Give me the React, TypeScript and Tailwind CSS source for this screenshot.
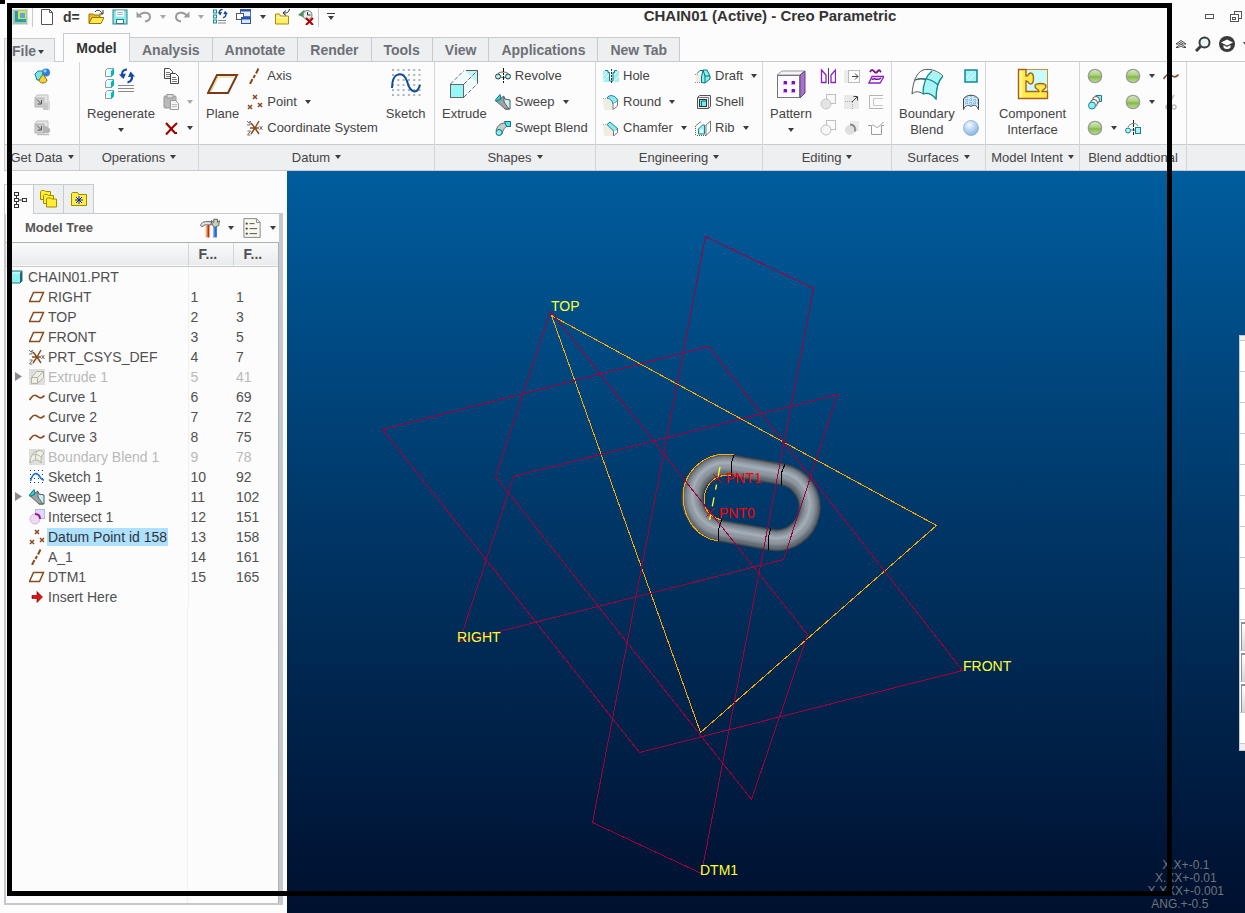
import type { ReactNode } from "react";

const BROWN = "#8b4a1c";

/* ---------- icon drawings, keyed by name ---------- */

const brownX = (x: number, y: number, s = 2) => (
  <path d={`M${x - s} ${y - s}L${x + s} ${y + s}M${x + s} ${y - s}L${x - s} ${y + s}`} stroke={BROWN} strokeWidth="1.5" />
);

const box = (x: number, y: number) => (
  <g key={`${x}-${y}`}>
    <path d={`M${x} ${y + 2}l2 -2h6v6l-2 2h-6z`} fill="#e9ffff" stroke="#8a9aa0" />
    <path d={`M${x + 5.5} ${y + 2.5}l3 -3v6l-3 3z`} fill="#00b8c4" />
  </g>
);

const greyCube = (
  <>
    <path d="M1 4L3 1h11v9l-2 3" fill="#e6e6e6" stroke="#c0c0c0" />
    <rect x="1" y="4" width="9" height="9" fill="#cdcdcd" stroke="#b4b4b4" />
    <path d="M3 5.500l4 4M7.500 6v4H3.500" stroke="#555" fill="none" />
  </>
);

const folder = (x: number, y: number) => (
  <path d={`M${x} ${y + 9}v-8l1 -1h3l1 1h5v8z`} fill="#ffee33" stroke="#a08a00" />
);

/* two arrows chasing each other, 16 x 14 */
const cycle = (
  <>
    <path d="M8 0.500C3 1 2.500 4 3.500 7.500" stroke="#1748a8" strokeWidth="2.200" fill="none" />
    <path d="M0 5.500L7 4.500L4.500 10z" fill="#1748a8" />
    <path d="M8.500 13.500C13 12.500 13.500 9 12.500 6" stroke="#1748a8" strokeWidth="2.200" fill="none" />
    <path d="M9 8L16 7.500L11.500 2.500z" fill="#1748a8" />
  </>
);

const icons: Record<string, ReactNode> = {
  app: (
    <>
      <rect x="0.5" y="0.5" width="15" height="15" fill="#9dc8b0" stroke="#d6dfda" />
      <rect x="3" y="2" width="11" height="11" fill="#2d9aa8" />
      <rect x="6" y="2" width="8" height="8" fill="#d5e24a" />
      <rect x="8" y="4" width="5" height="5" fill="#58a8e8" />
    </>
  ),
  newFile: <path d="M2.5 0.5h8l3 3v12h-11zM10.5 0.5v3h3" fill="#fff" stroke="#555" />,
  open: (
    <>
      <path d="M1 14V5h4l1 1h6v3" fill="#e8b820" stroke="#9a7400" />
      <path d="M1 14.500l3 -6h12l-3 6z" fill="#ffe94a" stroke="#9a7400" />
      <path d="M7 3c2 -3 6 -2 7 2M11.500 5h3.500v-4" fill="none" stroke="#333" />
    </>
  ),
  save: (
    <>
      <rect x="1" y="1" width="14" height="14" fill="#8aeaf0" stroke="#348088" />
      <rect x="4" y="1.500" width="8" height="6" fill="#fff" />
      <path d="M5 3.500h6M5 5.500h6" stroke="#9bc" />
      <rect x="4.500" y="10.500" width="7" height="4" fill="#fff" stroke="#348088" />
    </>
  ),
  undo: (
    <>
      <path d="M3 7C6 2 14 3 14 8C14 11 12 12 9 12.500" fill="none" stroke="#9b9b9b" strokeWidth="2" />
      <path d="M0.500 2.500v6h6z" fill="#9b9b9b" />
    </>
  ),
  redo: (
    <>
      <path d="M13 7C10 2 2 3 2 8C2 11 4 12 7 12.500" fill="none" stroke="#9b9b9b" strokeWidth="2" />
      <path d="M15.500 2.500v6h-6z" fill="#9b9b9b" />
    </>
  ),
  regenSmall: (
    <>
      {[1, 6, 11].map((y) => (
        <rect key={y} x="1.500" y={y} width="3" height="3" fill="#d7ffff" stroke="#178a94" />
      ))}
      <path d="M6 11.500h8M6 14h8" stroke="#888" />
      <g transform="translate(5.500 0) scale(0.650)">{cycle}</g>
    </>
  ),
  windows: (
    <>
      <rect x="4.500" y="0.500" width="10" height="7" fill="#e5edfa" stroke="#5871a0" />
      <path d="M4 1.500h11" stroke="#2855b0" strokeWidth="2" />
      <rect x="0.500" y="4.500" width="7" height="6" fill="#fff" stroke="#555" />
      <rect x="5.500" y="8.500" width="9" height="6" fill="#dce8fb" stroke="#2855b0" />
      <path d="M5 9.500h10" stroke="#2855b0" strokeWidth="2" />
    </>
  ),
  folderUp: (
    <>
      <path d="M1.500 15v-10h4l1 2h8v8z" fill="#ffee66" stroke="#a88b10" />
      <path d="M2 8.500h12" stroke="#fffcd0" />
      <path d="M15.500 0c-1 4 -3 4 -6 4M12 1.500l-3 2.500l3 2.500" stroke="#222" fill="none" />
    </>
  ),
  eraseView: (
    <>
      <path d="M0 6l6 -5l3 3l-2 5z" fill="#3f9a5e" />
      <circle cx="9.500" cy="6" r="4.500" fill="#e6f0ea" stroke="#777" />
      <path d="M9.500 3v3h3" stroke="#333" fill="none" />
      <path d="M8 9l7 7M15 9l-7 7" stroke="#b00000" strokeWidth="2" />
    </>
  ),
  primitives: (
    <>
      <path d="M1 6l3 -3h5l1 5l-3 4h-4z" fill="#73e8f0" stroke="#168090" />
      <circle cx="12" cy="4.500" r="4" fill="#2f7fe0" />
      <circle cx="11" cy="3" r="1.500" fill="#a8d0ff" />
      <path d="M9 6l4 6c0 4 -8 4 -8 0z" fill="#f3d33a" stroke="#8c6c10" />
    </>
  ),
  importGrey: (
    <>
      {greyCube}
      <path d="M9 9l1.500 -2H16v9H9z" fill="#dadada" />
      <path d="M9 9h5v7H9z" fill="#c8c8c8" />
    </>
  ),
  importFill: (
    <>
      {greyCube}
      <path d="M9 6h3l4 3v3l-2 1H9z" fill="#b4b4b4" />
      <path d="M3 14.500h12" stroke="#bbb" strokeWidth="1.500" />
    </>
  ),
  copy: (
    <>
      <path d="M1.500 0.500h5l3 3v7h-8z" fill="#fff" stroke="#444" />
      <path d="M3 4.500h4M3 6.500h4M3 8.500h4" stroke="#777" />
      <path d="M7.500 5.500h5l3 3v7h-8z" fill="#fff" stroke="#444" />
      <path d="M9 9.500h4M9 11.500h5M9 13.500h5" stroke="#777" />
    </>
  ),
  paste: (
    <>
      <rect x="1" y="2" width="12" height="12" rx="1" fill="#b9b9b9" stroke="#999" />
      <rect x="4" y="0.500" width="6" height="3.500" fill="#ddd" stroke="#999" />
      <path d="M7.500 6.500h5l3 3v6h-8z" fill="#f5f5f5" stroke="#999" />
      <path d="M9 10.500h5M9 12.500h5" stroke="#bbb" />
    </>
  ),
  del: (
    <>
      <path d="M3 3l9 10h2" stroke="#a00000" strokeWidth="2.200" />
      <path d="M14 3L9 8L3 14.500" stroke="#a00000" strokeWidth="2" />
    </>
  ),
  axis: <path d="M11.500 0.500l-2.500 5M8 7l-1.500 3M5.500 11l-2.500 5" stroke={BROWN} strokeWidth="2" fill="none" />,
  points: (
    <>
      {brownX(8, 3)}
      {brownX(3, 13)}
      {brownX(13, 11)}
    </>
  ),
  csys: (
    <>
      <path d="M3 8h9M8 8L12 1M8 8l4 6M8 8L4 14M8 8L4 3" stroke={BROWN} strokeWidth="1.500" />
      <path d="M0 1l2 2l2 -2M3 1v4H0M0.500 11h3l-3 4h3M12.500 6l3 4M15.500 6l-3 4" stroke="#707070" fill="none" />
    </>
  ),
  revolve: (
    <>
      <circle cx="3" cy="8.500" r="2.500" fill="#a9f4f6" stroke="#333" />
      <circle cx="13" cy="8.500" r="2.500" fill="#a9f4f6" stroke="#333" />
      <path d="M3 5.500c3 -2 7 -2 10 0M6 9c1 1 4 1 5 0" fill="none" stroke="#555" />
      <path d="M8.500 0v16" stroke="#111" strokeDasharray="4 1 2 1" />
    </>
  ),
  sweep: (
    <>
      <path d="M8 3h1l1 2l5 1v9h-5z" fill="#c6f3f6" stroke="#555" />
      <path d="M1 7l8 -5v6l5 7h-4z" fill="#9aa3a6" stroke="#444" strokeWidth="0.700" />
      <path d="M0.500 6L5 0.500L6 5L1 7.500z" fill="#39d4dc" stroke="#08737c" />
    </>
  ),
  sweptBlend: (
    <>
      <path d="M1 11c1 -4 3 -8 9 -8l4 3c-4 0 -6 4 -7 8z" fill="#c3cdd0" stroke="#666" />
      <path d="M9.500 1.500h6v5h-4z" fill="#5de0e6" stroke="#08737c" />
      <circle cx="4" cy="12.500" r="3" fill="#8ceef2" stroke="#08737c" />
    </>
  ),
  hole: (
    <>
      <path d="M0 3h5l1.500 2v9H0zM16 3h-5l-1.500 2v9H16z" fill="#a0f0f4" />
      <path d="M0 8l4 -4M0 13l6 -6M10 8l4 -4M10 14l6 -6" stroke="#fff" />
      <path d="M2 2.500h3v2h1.500v8.500h3.500V4.500h1.500v-2H14" fill="none" stroke="#147e88" />
      <path d="M8.500 1v15" stroke="#333" strokeDasharray="2 1" />
    </>
  ),
  round: (
    <>
      <path d="M0 5h5l5 5v6H1z" fill="#efede2" />
      <path d="M0 4.500h5" stroke="#aaa" strokeDasharray="1 1" />
      <path d="M4 4C6 0 13 1 15 7l-5 3C9 7 8 5 4 4z" fill="#8eeaf0" stroke="#168090" />
      <path d="M10 10v5.500l4.500 -3.500V7.500" fill="#fff" stroke="#777" />
    </>
  ),
  chamfer: (
    <>
      <path d="M0 5h5l5 5v6H1z" fill="#efede2" />
      <path d="M0 4.500h5" stroke="#aaa" strokeDasharray="1 1" />
      <path d="M4 4.500l3 -2.500l8 7l-4 2.500z" fill="#8eeaf0" stroke="#168090" />
      <path d="M10.500 11v5l4 -3.500V9.500" fill="#fff" stroke="#777" />
    </>
  ),
  draft: (
    <>
      <path d="M1 7h6v7H1z" fill="#efede2" />
      <path d="M0 6.500h4M0 14.500h7" stroke="#888" strokeDasharray="1 1" />
      <path d="M6.500 14.500V9L8 2h4l3 6v3l-5 4z" fill="#8aeef2" stroke="#08737c" />
      <path d="M10 15V8L8 2M10 8h5" stroke="#08737c" />
      <path d="M2 5.500l3 -3h4" fill="none" stroke="#08737c" />
    </>
  ),
  shell: (
    <>
      <path d="M2.500 3.500l2 -2h11v11l-2 2h-11z" fill="#eee" stroke="#555" />
      <path d="M2.500 3.500h11v11" fill="none" stroke="#777" />
      <rect x="4.500" y="5.500" width="7" height="7" fill="#7ae8ec" stroke="#333" />
      <path d="M6.500 12v-5h5" stroke="#08737c" fill="none" />
    </>
  ),
  rib: (
    <>
      <path d="M0.500 6v10M2 15.500h9" stroke="#555" strokeDasharray="1 1" />
      <path d="M1 5.500l5 -4M11 15.500V5l4.500 -4v10z" fill="none" stroke="#555" strokeWidth="0.800" />
      <path d="M3.500 14V9l4 -4h2v9z" fill="#a2f2f4" stroke="#168090" />
      <path d="M5 13V9.500h3V13z" fill="#e2ffff" />
    </>
  ),
  mirror: (
    <>
      <path d="M1.500 14.500V2L6 7v7.500zM15.500 14.500V2L11 7v7.500z" fill="#fff" stroke="#8a1fd0" strokeWidth="1.300" />
      <path d="M8.500 0v16" stroke="#444" />
    </>
  ),
  extend: (
    <>
      <path d="M0 2h5v13H0" fill="#ececec" />
      <rect x="4.500" y="2.500" width="11" height="12" fill="none" stroke="#bbb" />
      <path d="M8 8.500h6M11 5.500l3 3l-3 3" stroke="#444" fill="none" />
    </>
  ),
  project: (
    <>
      <path d="M2 4c3 -6 4 3 7 0s2 -2 4 0" fill="none" stroke="#7a1090" strokeWidth="1.800" />
      <path d="M4 8.500h12l-4 6.500H1z" fill="#fff" stroke="#8a1fd0" strokeWidth="1.300" />
      <path d="M4 12c2 -4 4 2 9 -2" stroke="#7a1090" fill="none" strokeWidth="1.500" />
    </>
  ),
  merge: (
    <>
      <rect x="6.500" y="0.500" width="9" height="9" fill="#f8f8f8" stroke="#c0c0c0" />
      <circle cx="6" cy="10" r="5" fill="#e4e4e4" stroke="#c8c8c8" />
    </>
  ),
  trim: (
    <>
      <path d="M0 1h12l3 3v11H0z" fill="#e9e9e9" />
      <path d="M1 7.500h7.500V15" stroke="#aaa" strokeDasharray="1 1" />
      <path d="M8 8l5 -5M9.500 2.500h4v4" stroke="#444" fill="none" />
    </>
  ),
  offset: (
    <>
      <path d="M15 1.500H1.500v13H15" fill="none" stroke="#b4b4b4" />
      <path d="M15 4.500H5.500v7H15" fill="none" stroke="#c8c8c8" />
    </>
  ),
  merge2: (
    <>
      <rect x="6.500" y="0.500" width="9" height="9" fill="none" stroke="#c0c0c0" />
      <circle cx="6" cy="10" r="5" fill="#f6f6f6" stroke="#c0c0c0" />
    </>
  ),
  intersectGrey: (
    <>
      <rect x="6" y="1" width="9" height="10" fill="#ececec" />
      <circle cx="6" cy="10" r="5" fill="#dedede" />
      <path d="M6 4.500c4 0 6 3 5 7" fill="none" stroke="#8a8a8a" strokeWidth="2" />
    </>
  ),
  solidify: <path d="M0 5.500h3.500v9h10v-9H16M3.500 6c3 -3 4 3 7 1l5 -5" fill="none" stroke="#9c9c9c" />,
  fill: (
    <>
      <rect x="2" y="2" width="12" height="12" fill="#a5f1f5" stroke="#108890" strokeWidth="1.500" />
      <path d="M3 10l7 -7M5 13l8 -8" stroke="#dff" />
    </>
  ),
  style: (
    <>
      <path d="M0.500 5c3 -5 12 -5 15 0v10.500c-2 -5 -5 -5 -7.500 -3c-3 -2 -6 -1 -7.500 3z" fill="#cfe8fa" stroke="#444" />
      <path d="M4 3v9M8 2v10M12 3v9M2 6h13M2 9h13" stroke="#6ba2d8" strokeDasharray="1 1" />
    </>
  ),
  sphere: <circle cx="8" cy="8" r="7.500" fill="url(#sphereBlue)" stroke="#7ea6cf" strokeWidth="0.700" />,
  green: <circle cx="8" cy="8" r="6.700" fill="url(#ballGreen)" stroke="#9c9c9c" strokeWidth="1.300" />,
  blendChain: (
    <>
      <path d="M8.500 1.500h6v6h-3" fill="#8ceef2" stroke="#168090" />
      <circle cx="9" cy="6" r="3.500" fill="#fff" stroke="#555" />
      <circle cx="7" cy="9" r="3.500" fill="#fff" stroke="#555" />
      <circle cx="5" cy="11.500" r="3.500" fill="#8ceef2" stroke="#168090" />
    </>
  ),
  blendMirror: (
    <>
      <circle cx="3" cy="10.500" r="2.500" fill="#a9f4f6" stroke="#168090" />
      <rect x="10.500" y="7.500" width="5" height="6" fill="#a9f4f6" stroke="#168090" />
      <path d="M3 7c2 -4 8 -5 10 -1M6 10h4" fill="none" stroke="#777" />
      <path d="M8.500 0v16" stroke="#222" strokeDasharray="3 1" />
    </>
  ),
  curve: <path d="M0.500 11C3 8 4 5 7 6.500S11 11 15.500 6.500" stroke={BROWN} strokeWidth="1.600" fill="none" />,
  percent: <path d="M5 5l3 5M11 1l-5 9M3 13a2 2 0 1 0 4 0a2 2 0 1 0 -4 0M9 13a2 2 0 1 0 4 0a2 2 0 1 0 -4 0" stroke="#bbb" fill="none" strokeWidth="1.500" />,
  planeSmall: <path d="M4.500 3.500h10l-4 9h-10z" fill="#fff" stroke={BROWN} strokeWidth="1.500" />,
  extrudeGrey: (
    <>
      <rect width="16" height="16" fill="#dedede" />
      <path d="M2.500 8.500h6v6h-6zM2.500 8.500l5 -6h7v6l-6 6M8.500 8.500l6 -6" fill="#eeeee6" stroke="#b4b4a0" />
    </>
  ),
  boundaryGrey: (
    <>
      <rect width="16" height="16" fill="#dedede" />
      <path d="M1 14C1 8 4 3 8 2c3 -1 5 0 7 2c-3 3 -3 5 -3 10c-2 -4 -7 -4 -11 0zM8 2c-2 4 -2 5 -1 9M4 6c4 -1 6 0 9 3" fill="#efefe8" stroke="#b4b4a0" />
    </>
  ),
  sketchSmall: (
    <>
      {[1, 5, 9, 13].map((y) => (
        <path key={y} d={`M1 ${y + 0.5}h15`} stroke="#303080" strokeDasharray="1 3" />
      ))}
      <path d="M1.500 12C4 3 8 3 11 8c1 2 3 3 4 3" stroke="#1478e0" strokeWidth="1.600" fill="none" />
    </>
  ),
  intersect: (
    <>
      <rect x="6.500" y="0.500" width="9" height="9" fill="#dcdcfa" stroke="#b5b5ee" />
      <circle cx="6" cy="10" r="5" fill="#ecdcf2" stroke="#d8b4e8" />
      <path d="M6 5c3 0 5 2 5 5" fill="none" stroke="#a010a0" strokeWidth="2" />
    </>
  ),
  insert: (
    <path d="M3 6.500h5v-4l5.500 5.500l-5.500 5.500v-4h-5z" fill="#e81010" stroke="#500" strokeWidth="0.600" />
  ),
  part: (
    <>
      <path d="M2 4l2 -2h11v10l-2 2H2z" fill="#8cf2f2" stroke="#287880" />
      <path d="M13 4l2 -2v10l-2 2z" fill="#236870" />
      <path d="M2 4h11" stroke="#e8ffff" />
    </>
  ),
  treeTab: (
    <>
      <path d="M3.500 3v11M3.500 8h8" stroke="#333" />
      <rect x="1.500" y="0.500" width="4" height="3" fill="#fff" stroke="#333" />
      <rect x="1.500" y="6.500" width="4" height="3" fill="#fff" stroke="#333" />
      <rect x="1.500" y="12.500" width="4" height="3" fill="#fff" stroke="#333" />
      <rect x="9.500" y="6.500" width="4" height="3" fill="#fff" stroke="#333" />
    </>
  ),
  tools: (
    <>
      <path d="M0.500 6C1 3 4 2.500 9 3v2.500H4L1.500 7z" fill="#dfe3e5" stroke="#666" strokeWidth="0.800" />
      <path d="M4.500 5.500h3v10h-3z" fill="#e8b080" />
      <path d="M6 5.500h1.500v10H6z" fill="#c03010" />
      <path d="M10.500 6h3v9.500h-3z" fill="#2468e0" />
      <path d="M10.500 6h1v9.500h-1z" fill="#90b8f8" />
      <path d="M9 2l2 1.500V1l3 0l0 2.500l1.500 -1.500l-0.500 4l-3 1.500l-2 -1.500z" fill="#c9cfc0" stroke="#555" strokeWidth="0.700" />
    </>
  ),
  list: (
    <>
      <path d="M1.500 0.500h10l3 3v12h-13zM11.500 0.500v3h3" fill="#f9f8ee" stroke="#888" strokeWidth="0.800" />
      <path d="M6 4.500h4M6 8.500h6M6 12.500h6" stroke="#555" strokeWidth="0.800" />
      <path d="M3 4.500h1.500M3 8.500h1.500M3 12.500h1.500" stroke="#333" strokeWidth="1.500" />
    </>
  ),
};

const bigIcons: Record<string, ReactNode> = {
  regenerate: (
    <>
      {box(0.5, 0.5)}
      {box(0.5, 11.5)}
      {box(0.5, 22.5)}
      <path d="M13 17.500h16M13 20.500h16M13 23.500h16" stroke="#8a8a8a" />
      <g transform="translate(14 1)">{cycle}</g>
    </>
  ),
  plane: (
    <>
      <path d="M10 7h20l-9 18H1z" fill="#fff" stroke="#7a3c18" strokeWidth="2" />
      <path d="M11.500 9h15.500" stroke="#e0c880" />
      <path d="M11 9L4 23.500" stroke="#e8c860" />
    </>
  ),
  sketch: (
    <>
      {[2, 7, 12, 17, 22, 27].map((y) => (
        <path key={y} d={`M2 ${y}h29`} stroke="#a8b4c4" strokeWidth="2" strokeDasharray="2 3.300" />
      ))}
      <path d="M2 20C2 3 14 3 17 13C20 25 27 27 30 17" stroke="#104a98" strokeWidth="2" fill="none" />
    </>
  ),
  extrude: (
    <>
      <path d="M17 2.500h12.500v13L16 29V16H3z" fill="#f1fdfd" />
      <path d="M18 2.500h11.500v12L19 5z" fill="#bff4f6" />
      <path d="M18 2.500h11.500v13" fill="none" stroke="#555" />
      <path d="M2.500 16L16 2.500M16 16L29.500 2.500M16 29L29.500 15.500" stroke="#666" strokeDasharray="4 2" fill="none" />
      <rect x="2.500" y="16.500" width="13" height="13" fill="#96f8f8" stroke="#666" />
    </>
  ),
  pattern: (
    <>
      <path d="M2 7l5 -4h23l-5 4z" fill="#f8f2fc" stroke="#999" />
      <path d="M25 7l5 -4v22l-5 5z" fill="#a872cc" stroke="#684080" />
      <rect x="2.500" y="7.500" width="22" height="22" fill="#fcfaff" stroke="#777" />
      {[[9, 13], [17, 13], [9, 21], [17, 21]].map(([x, y]) => (
        <g key={`${x}-${y}`}>
          <rect x={x - 1} y={y} width="4" height="4" fill="#d0a0ec" />
          <rect x={x} y={y} width="3" height="3" fill="#7a10c0" />
        </g>
      ))}
    </>
  ),
  boundary: (
    <>
      <path d="M1 26C2 14 5 5 12 2C19 0 27 3 32 8C26 14 25 22 25 31C20 25 15 24 12 26C8 23 4 23 1 26Z" fill="#fafdfd" stroke="#555" />
      <path d="M21 3C26 4 29 6 32 8C26 14 25 22 25 31C21 26 17 24 12 26C12 20 12 17 15 12C17 8 19 5 21 3Z" fill="#a6f4f4" />
      <path d="M4 12C12 9 21 11 27 17M21 3C15 8 12 16 12 26M32 8C26 14 25 22 25 31C21 26 17 24 12 26" fill="none" stroke="#108890" strokeWidth="1.300" />
      <path d="M4 12c4 -1.500 7 -1.500 11 0" stroke="#555" />
    </>
  ),
  component: (
    <>
      <rect x="1.500" y="1.500" width="29" height="29" fill="#c8fcfd" stroke="#d09030" />
      <path d="M1.500 1.500H9V8C11 9 11 5 13.500 5C17.500 5 17.500 16 13.500 16C11 16 11 12 9 13V23.500H22C22 21 18 21.500 18 18.500C18 14.500 29 14.500 29 18.500C29 21.500 25 21 25 23.500H30.500V30.500H1.500Z" fill="#ffe94c" stroke="#a86018" strokeWidth="1.400" />
      <path d="M2.500 2.500h3v27h-3z" fill="#fff6a8" opacity="0.700" />
    </>
  ),
};

function Icon({ n }: { n: string }) {
  return (
    <svg className="block size-4 shrink-0" viewBox="0 0 16 16" fill="none" aria-hidden="true">
      {icons[n]}
    </svg>
  );
}

function Arrow({ dim = false }: { dim?: boolean }) {
  return (
    <svg className={`block h-1 w-1.5 shrink-0 ${dim ? "text-[#a8a8a8]" : "text-[#3c3c3c]"}`} viewBox="0 0 6 4" aria-hidden="true">
      <path d="M0 0h6L3 4z" fill="currentColor" />
    </svg>
  );
}

function IconButton({ n, label }: { n: string; label: string }) {
  return (
    <button type="button" aria-label={label} className="flex h-[26px] w-4 items-center">
      <Icon n={n} />
    </button>
  );
}

function DropButton({ label, dim }: { label: string; dim?: boolean }) {
  return (
    <button type="button" aria-label={label} className="flex h-[26px] w-1.5 items-center">
      <Arrow dim={dim} />
    </button>
  );
}

function RowButton({ n, text, drop }: { n: string; text: string; drop?: boolean }) {
  return (
    <button type="button" className="flex h-[26px] items-center gap-1 whitespace-nowrap">
      <Icon n={n} />
      <span>{text}</span>
      {drop && (
        <span className="ml-1">
          <Arrow />
        </span>
      )}
    </button>
  );
}

function BigButton({ n, text, drop }: { n: string; text: string; drop?: boolean }) {
  return (
    <button type="button" className="flex shrink-0 flex-col items-center gap-1.5 self-start pt-[5px] leading-4">
      <svg className="block size-8" viewBox="0 0 32 32" fill="none" aria-hidden="true">
        {bigIcons[n]}
      </svg>
      <span className="whitespace-pre-line text-center">{text}</span>
      {drop && <Arrow />}
    </button>
  );
}

function Group({ title, drop = true, className, children }: { title: string; drop?: boolean; className: string; children: ReactNode }) {
  return (
    <section className={`flex shrink-0 flex-col border-r border-[#d3d6d9] ${className}`}>
      <div className="flex flex-1 gap-2 px-[7px] pt-px pb-[3px]">{children}</div>
      <button type="button" className="flex h-[26px] items-center justify-center gap-[5px] whitespace-nowrap border-t border-[#c8cbce] bg-[#eeeff1]">
        {title}
        {drop && (
          <span className="pb-0.5">
            <Arrow />
          </span>
        )}
      </button>
    </section>
  );
}

function TitleBar() {
  return (
    <header className="flex h-[33px] items-center">
      <div className="flex h-full w-[340px] shrink-0 items-center pl-3">
        <Icon n="app" />
        <span className="mx-1 h-5 w-px bg-[#c8cbce]" />
        <span className="ml-0.5"><IconButton n="newFile" label="New" /></span>
        <button type="button" aria-label="Dimension display" className="ml-2 text-sm font-bold leading-4 text-[#3a3a3a]">d=</button>
        <span className="ml-2"><IconButton n="open" label="Open" /></span>
        <span className="ml-2"><IconButton n="save" label="Save" /></span>
        <span className="ml-2"><IconButton n="undo" label="Undo" /></span>
        <span className="ml-2"><DropButton label="Undo list" dim /></span>
        <span className="ml-2"><IconButton n="redo" label="Redo" /></span>
        <span className="ml-2"><DropButton label="Redo list" dim /></span>
        <span className="ml-2"><IconButton n="regenSmall" label="Regenerate" /></span>
        <span className="ml-2"><IconButton n="windows" label="Windows" /></span>
        <span className="ml-2"><DropButton label="Window list" /></span>
        <span className="ml-2"><IconButton n="folderUp" label="Close" /></span>
        <span className="ml-2"><IconButton n="eraseView" label="Erase not displayed" /></span>
        <span className="ml-1 h-5 w-px bg-[#c8cbce]" />
        <button type="button" aria-label="Customize toolbar" className="ml-2 flex flex-col items-center gap-0.5">
          <span className="h-px w-2 bg-[#3c3c3c]" />
          <Arrow />
        </button>
      </div>
      <h1 className="flex-1 whitespace-nowrap text-center text-[15px] font-bold text-[#333]">CHAIN01 (Active) - Creo Parametric</h1>
      <div className="flex w-[45px] shrink-0 items-center gap-4 pl-[5px]">
        <button type="button" aria-label="Minimize" className="h-[5px] w-[9px] border border-[#555]" />
        <button type="button" aria-label="Restore">
          <svg className="block h-3 w-3" viewBox="0 0 12 12" fill="none" stroke="#555" aria-hidden="true">
            <rect x="4.500" y="0.500" width="7" height="7" />
            <rect x="0.500" y="3.500" width="8" height="7" fill="#fff" />
            <rect x="2.500" y="6.500" width="3" height="2" />
          </svg>
        </button>
      </div>
    </header>
  );
}

const tabs = ["Analysis", "Annotate", "Render", "Tools", "View", "Applications", "New Tab"];

function TabRow() {
  return (
    <nav className="relative z-10 -mb-px flex h-[29px] items-end pl-1 text-sm font-bold text-[#6c7076]">
      <button type="button" className="flex h-6 w-[51px] items-center gap-0.5 border border-b-0 border-[#c8cbce] bg-[#eeeff1] pl-[7px]">
        File <span className="mt-0.5"><Arrow /></span>
      </button>
      <button type="button" className="ml-2 h-[29px] w-[67px] border border-b-0 border-[#c8cbce] bg-[#fcfcfc] text-[#333]">Model</button>
      {tabs.map((t) => (
        <button key={t} type="button" className="h-[25px] whitespace-nowrap border border-l-0 border-[#c8cbce] bg-[#eeeff1] px-3">
          {t}
        </button>
      ))}
      <div className="ml-auto flex h-9 items-center gap-2 overflow-hidden text-[#333]">
        <button type="button" aria-label="Minimize ribbon">
          <svg className="block h-2 w-3" viewBox="0 0 12 8" fill="#fff" stroke="#444" aria-hidden="true">
            <path d="M1 4l5 -3.500l5 3.500H8.500L6 2.500L3.500 4zM1 7.500l5 -3.500l5 3.500H8.500L6 6L3.500 7.500z" />
          </svg>
        </button>
        <button type="button" aria-label="Search">
          <svg className="block size-4" viewBox="0 0 16 16" fill="none" stroke="#3a3a3a" aria-hidden="true">
            <circle cx="9.500" cy="6.500" r="5" strokeWidth="2" fill="#e8f6ff" />
            <path d="M5.500 10.500L1 15" strokeWidth="3" />
          </svg>
        </button>
        <button type="button" aria-label="Learning connector">
          <svg className="block size-4" viewBox="0 0 16 16" aria-hidden="true">
            <circle cx="8" cy="8" r="8" fill="#3a3a3a" />
            <path d="M2 6.500l6 -3l6 3l-6 3z" fill="#fff" />
            <path d="M4.500 9v2.500c2 2 5 2 7 0V9L8 11z" fill="#fff" />
          </svg>
        </button>
        <span className="-mr-1"><DropButton label="More help" /></span>
      </div>
    </nav>
  );
}

function Ribbon() {
  return (
    <div className="ml-1 flex h-[110px] overflow-hidden border-y border-l border-[#c8cbce] text-[13px] text-[#444]">
      <Group title="Get Data" className="w-[75px]">
        <div className="mx-auto flex flex-col">
          <IconButton n="primitives" label="User-defined feature" />
          <IconButton n="importGrey" label="Copy geometry" />
          <IconButton n="importFill" label="Shrinkwrap" />
        </div>
      </Group>
      <Group title="Operations" className="w-[119px]">
        <BigButton n="regenerate" text="Regenerate" drop />
        <div className="grid grid-cols-[16px_6px] content-start gap-x-2">
          <IconButton n="copy" label="Copy" /><span />
          <IconButton n="paste" label="Paste" /><DropButton label="Paste options" dim />
          <IconButton n="del" label="Delete" /><DropButton label="Delete options" />
        </div>
      </Group>
      <Group title="Datum" className="w-[236px]">
        <BigButton n="plane" text="Plane" />
        <div className="flex flex-col">
          <RowButton n="axis" text="Axis" />
          <RowButton n="points" text="Point" drop />
          <RowButton n="csys" text="Coordinate System" />
        </div>
        <BigButton n="sketch" text="Sketch" />
      </Group>
      <Group title="Shapes" className="w-[161px]">
        <BigButton n="extrude" text="Extrude" />
        <div className="flex flex-col">
          <RowButton n="revolve" text="Revolve" />
          <RowButton n="sweep" text="Sweep" drop />
          <RowButton n="sweptBlend" text="Swept Blend" />
        </div>
      </Group>
      <Group title="Engineering" className="w-[167px]">
        <div className="grid grid-cols-[92px_auto] content-start">
          <RowButton n="hole" text="Hole" />
          <RowButton n="draft" text="Draft" drop />
          <RowButton n="round" text="Round" drop />
          <RowButton n="shell" text="Shell" />
          <RowButton n="chamfer" text="Chamfer" drop />
          <RowButton n="rib" text="Rib" drop />
        </div>
      </Group>
      <Group title="Editing" className="w-[129px]">
        <BigButton n="pattern" text="Pattern" drop />
        <div className="grid grid-cols-[16px_16px_16px] content-start gap-x-2">
          <IconButton n="mirror" label="Mirror" />
          <IconButton n="extend" label="Extend" />
          <IconButton n="project" label="Project" />
          <IconButton n="merge" label="Merge" />
          <IconButton n="trim" label="Trim" />
          <IconButton n="offset" label="Offset" />
          <IconButton n="merge2" label="Thicken" />
          <IconButton n="intersectGrey" label="Intersect" />
          <IconButton n="solidify" label="Solidify" />
        </div>
      </Group>
      <Group title="Surfaces" className="w-[94px]">
        <BigButton n="boundary" text={"Boundary\nBlend"} />
        <div className="flex flex-col">
          <IconButton n="fill" label="Fill" />
          <IconButton n="style" label="Style" />
          <IconButton n="sphere" label="Freestyle" />
        </div>
      </Group>
      <Group title="Model Intent" className="w-[94px]">
        <div className="mx-auto flex">
          <BigButton n="component" text={"Component\nInterface"} />
        </div>
      </Group>
      <Group title="Blend addtional" drop={false} className="w-[107px]">
        <div className="grid grid-cols-[16px_6px_16px_6px_16px] content-start gap-x-2">
          <IconButton n="green" label="Protrusion" /><span />
          <IconButton n="green" label="Cut" /><DropButton label="Cut options" />
          <IconButton n="curve" label="Curve" />
          <IconButton n="blendChain" label="Blend" /><span />
          <IconButton n="green" label="Surface" /><DropButton label="Surface options" />
          <IconButton n="percent" label="Ratio" />
          <IconButton n="green" label="Thin" /><DropButton label="Thin options" />
          <IconButton n="blendMirror" label="Rotational blend" /><span /><span />
        </div>
      </Group>
      <div className="flex flex-1 flex-col justify-end">
        <div className="h-[26px] border-t border-[#c8cbce] bg-[#eeeff1]" />
      </div>
    </div>
  );
}

type Row = { icon: string; name: string; a?: string; b?: string; dim?: boolean; open?: boolean; sel?: boolean };

const rows: Row[] = [
  { icon: "planeSmall", name: "RIGHT", a: "1", b: "1" },
  { icon: "planeSmall", name: "TOP", a: "2", b: "3" },
  { icon: "planeSmall", name: "FRONT", a: "3", b: "5" },
  { icon: "csys", name: "PRT_CSYS_DEF", a: "4", b: "7" },
  { icon: "extrudeGrey", name: "Extrude 1", a: "5", b: "41", dim: true, open: true },
  { icon: "curve", name: "Curve 1", a: "6", b: "69" },
  { icon: "curve", name: "Curve 2", a: "7", b: "72" },
  { icon: "curve", name: "Curve 3", a: "8", b: "75" },
  { icon: "boundaryGrey", name: "Boundary Blend 1", a: "9", b: "78", dim: true },
  { icon: "sketchSmall", name: "Sketch 1", a: "10", b: "92" },
  { icon: "sweep", name: "Sweep 1", a: "11", b: "102", open: true },
  { icon: "intersect", name: "Intersect 1", a: "12", b: "151" },
  { icon: "points", name: "Datum Point id 158", a: "13", b: "158", sel: true },
  { icon: "axis", name: "A_1", a: "14", b: "161" },
  { icon: "planeSmall", name: "DTM1", a: "15", b: "165" },
  { icon: "insert", name: "Insert Here" },
];

function ModelTree() {
  return (
    <aside className="flex w-[287px] shrink-0 flex-col pt-[13px] pr-1 pb-2 pl-1">
      <div className="relative z-10 -mb-px flex h-[30px]">
        <button type="button" aria-label="Model tree" className="flex w-[30px] items-center justify-end border border-b-0 border-[#c8cbce] bg-[#fcfcfc] pr-1">
          <Icon n="treeTab" />
        </button>
        <button type="button" aria-label="Folder browser" className="flex w-[30px] items-center justify-center border border-l-0 border-[#c8cbce] bg-[#eeeff1]">
          <svg className="block size-[18px]" viewBox="0 0 18 18" fill="none" aria-hidden="true">
            {folder(0.5, 0.5)}
            {folder(3.5, 4.5)}
            {folder(6.5, 8)}
          </svg>
        </button>
        <button type="button" aria-label="Favorites" className="flex w-[30px] items-center justify-center border border-l-0 border-[#c8cbce] bg-[#eeeff1]">
          <svg className="block size-[18px]" viewBox="0 0 18 18" fill="none" aria-hidden="true">
            <path d="M1.500 15.500v-12l1 -1h5l1 2h8v11z" fill="#ffee44" stroke="#a08a00" />
            <path d="M9 6v8M5 10h8M6 7l6 6M12 7l-6 6" stroke="#1020c0" />
          </svg>
        </button>
      </div>
      <div className="flex flex-1 flex-col border-2 border-r-4 border-t border-[#c5c8cc]">
        <div className="flex h-7 items-center pr-[3px] pl-[19px]">
          <h2 className="flex-1 text-[13px] font-bold text-[#555]">Model Tree</h2>
          <button type="button" aria-label="Tree settings" className="flex items-center gap-2">
            <svg className="block size-5" viewBox="0 0 16 16" fill="none" aria-hidden="true">{icons.tools}</svg>
            <Arrow />
          </button>
          <button type="button" aria-label="Tree display" className="ml-2 flex items-center gap-2">
            <svg className="block size-5" viewBox="0 0 16 16" fill="none" aria-hidden="true">{icons.list}</svg>
            <Arrow />
          </button>
        </div>
        <div className="flex flex-1 flex-col border-t border-r border-[#aeb1b4]">
          <table className="w-full table-fixed text-sm leading-5 text-[#505050]">
            <colgroup>
              <col />
              <col className="w-[45px]" />
              <col className="w-[45px]" />
            </colgroup>
            <thead>
              <tr className="h-[23px] border-b border-[#c8cbce] bg-linear-to-b from-[#f9fafa] to-[#e9ebed]">
                <th aria-label="Feature" />
                <th className="border-l border-[#d3d6d9] py-0 pl-2.5 text-left">F...</th>
                <th className="border-l border-[#d3d6d9] py-0 pl-2.5 text-left">F...</th>
              </tr>
            </thead>
            <tbody>
              <tr className="h-5">
                <td className="p-0">
                  <div className="flex items-center gap-[5px] pl-px"><Icon n="part" />CHAIN01.PRT</div>
                </td>
                <td className="border-l border-[#f0f1f2]" />
                <td />
              </tr>
              {rows.map((r) => (
                <tr key={r.name} className={r.dim ? "h-5 text-[#b9b9b9]" : "h-5"}>
                  <td className="p-0">
                    <div className="flex items-center pl-2">
                      <span className="w-[15px]">
                        {r.open && (
                          <svg className="block h-[9px] w-2" viewBox="0 0 8 9" aria-hidden="true">
                            <path d="M1 0l7 4.500l-7 4.500z" fill="#8a8a8a" />
                          </svg>
                        )}
                      </span>
                      <Icon n={r.icon} />
                      <span className={r.sel ? "ml-0.5 whitespace-nowrap bg-[#aee1ff] px-px leading-[18px] text-[#333]" : "ml-0.5 whitespace-nowrap px-px"}>{r.name}</span>
                    </div>
                  </td>
                  <td className="border-l border-[#f0f1f2] py-0 pl-0.5">{r.a}</td>
                  <td className="py-0 pl-[3px]">{r.b}</td>
                </tr>
              ))}
            </tbody>
          </table>
          <div className="mr-[90px] flex-1 border-r border-[#f0f1f2]" />
        </div>
      </div>
    </aside>
  );
}

const LINK = "M732 465.500L783 474.500A33 33 0 0 1 770 539.500L719 530.500A33 33 0 0 1 732 465.500Z";

const shades = [
  { w: 22, c: "#3f454b", dy: 0 },
  { w: 20, c: "#535a61", dy: 0 },
  { w: 18, c: "#646c74", dy: 0 },
  { w: 15, c: "#747d86", dy: -1 },
  { w: 12, c: "#838c95", dy: -1 },
  { w: 9, c: "#8f98a1", dy: -1 },
  { w: 5, c: "#99a2ac", dy: -2 },
  { w: 2, c: "#a4adb6", dy: -2 },
];

function Viewport() {
  return (
    <main className="relative flex-1 overflow-hidden bg-linear-to-b from-[#005d9e] to-[#00102f]">
      <svg className="absolute inset-0 size-full" viewBox="287 171 958 742" fill="none" role="img" aria-label="Chain link with datum planes">
        <g>
          {shades.map((s) => (
            <path key={s.w} d={LINK} stroke={s.c} strokeWidth={s.w} transform={`translate(0 ${s.dy})`} />
          ))}
        </g>
        <g stroke="#ffa800" strokeWidth="1" shapeRendering="crispEdges">
          <path d="M734 455C706 450 683 471 683 497C684 521 698 538 718 541M731 476C714 473 704 486 704 501C705 511 711 518 722 520" />
          <path d="M551.500 315.500L936.500 525.500L700.500 732.500Z" />
        </g>
        <g stroke="#000" strokeWidth="1" shapeRendering="crispEdges">
          <path d="M734 455L731 464V476M785 464L781 474V485M722 519L719 528L718 541M771 528L768 538V550" />
        </g>
        <g stroke="#a0003c" strokeWidth="1" shapeRendering="crispEdges">
          <path d="M382.500 429.500L708.500 346.500L962.500 670.500L639.500 752.500Z" />
          <path d="M513.500 476.500L837.500 394.500L783.500 559.500L459.500 641.500Z" />
          <path d="M550.500 311.500L495.500 476.500L751.500 799.500L807.500 634.500Z" />
          <path d="M705.500 236.500L813.500 288.500L701.500 873.500L592.500 822.500Z" />
        </g>
        <path d="M720 467L709 523" stroke="#ffff20" strokeWidth="1.300" strokeDasharray="9 9 5 8" />
        <path d="M713 474l9 9M722 474l-9 9M706 508l9 9M715 508l-9 9" stroke="#ff0000" strokeWidth="1" />
        <g fontFamily="'Liberation Sans', Arial, sans-serif" fontSize="14" fill="#ffff30">
          <text x="551" y="311">TOP</text>
          <text x="457" y="642">RIGHT</text>
          <text x="963" y="671">FRONT</text>
          <text x="700" y="875">DTM1</text>
          <text x="726" y="483" fill="#ff0000">PNT1</text>
          <text x="719" y="518" fill="#ff0000">PNT0</text>
        </g>
      </svg>
      <div className="absolute right-[21px] bottom-0.5 flex flex-col items-center text-xs leading-[13px] text-[#70757a]">
        <span>X.X+-0.1</span>
        <span>X.XX+-0.01</span>
        <span>X.XXX+-0.001</span>
        <span className="pr-3">ANG.+-0.5</span>
      </div>
      <div className="absolute top-[164px] right-0 flex w-1.5 flex-col divide-y divide-[#c5c8cc] border border-r-0 border-[#c5c8cc] bg-white">
        <div className="h-[5px] bg-[#eeeff1]" />
        {Array.from({ length: 13 }, (_, i) => (
          <div key={i} className="h-[31px] pt-0.5 pl-px">
            {i > 8 && i < 12 && <div className="h-7 border-t-2 border-l border-[#8d9095] bg-linear-to-b from-white to-[#d4d6da]" />}
          </div>
        ))}
        <div className="h-1.5 bg-[#eeeff1]" />
      </div>
    </main>
  );
}

export default function App() {
  return (
    <div className="relative flex min-h-screen flex-col overflow-hidden bg-[#fcfcfc] font-['Liberation_Sans',Arial,sans-serif]">
      <svg className="absolute size-0" aria-hidden="true">
        <defs>
          <radialGradient id="sphereBlue" cx="0.400" cy="0.300" r="0.700">
            <stop offset="0" stopColor="#f4faff" />
            <stop offset="1" stopColor="#86b4e4" />
          </radialGradient>
          <linearGradient id="ballGreen" x1="0" y1="0" x2="0" y2="1">
            <stop offset="0" stopColor="#dcecc8" />
            <stop offset="0.450" stopColor="#a8d078" />
            <stop offset="0.550" stopColor="#84b84c" />
            <stop offset="1" stopColor="#c0e490" />
          </linearGradient>
        </defs>
      </svg>
      <TitleBar />
      <TabRow />
      <Ribbon />
      <div className="flex flex-1">
        <ModelTree />
        <Viewport />
      </div>
      <div className="pointer-events-none absolute top-[3px] right-[73px] bottom-[17px] left-[7px] z-20 border-[5px] border-black" />
      <div className="pointer-events-none absolute top-0 left-0 z-20 h-1 w-[5px] bg-black" />
    </div>
  );
}
